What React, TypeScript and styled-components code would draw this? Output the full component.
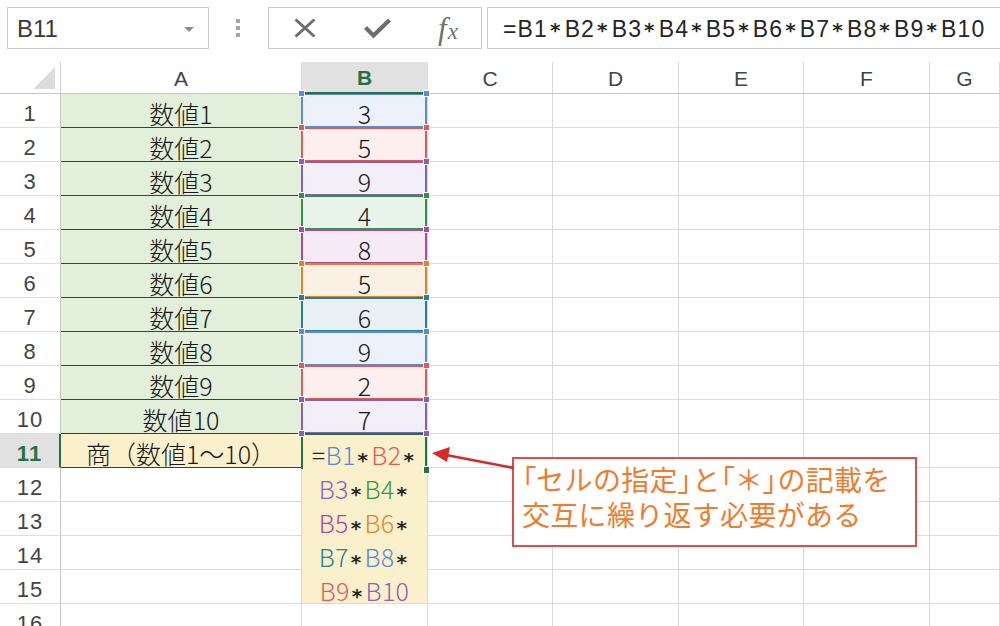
import React from "react";
import styled, { createGlobalStyle } from "styled-components";

const GlobalStyle = createGlobalStyle`
  html, body { margin: 0; padding: 0; background: #ffffff; }
  body { font-family: "Liberation Sans", "Noto Sans CJK JP", sans-serif; }
  #root { width: 1000px; height: 626px; }
`;

type RangeColor = { border: string; bg: string; text: string };

const BLUE: RangeColor = { border: "#5b8bd0", bg: "#edf1fa", text: "#5b8bd0" };
const RED: RangeColor = { border: "#e05a5a", bg: "#fcefee", text: "#e45a5a" };
const PURPLE: RangeColor = { border: "#8762b4", bg: "#f2eff8", text: "#8a62b8" };
const GREEN: RangeColor = { border: "#2f9340", bg: "#e8f3e9", text: "#2f9a40" };
const MAGENTA: RangeColor = { border: "#b4479b", bg: "#f6ebf4", text: "#b9449e" };
const ORANGE: RangeColor = { border: "#df8428", bg: "#faf0e4", text: "#e3872b" };
const TEAL: RangeColor = { border: "#2a7d9c", bg: "#e9f0f4", text: "#2a80a2" };

const VALUES: { value: number; color: RangeColor }[] = [
  { value: 3, color: BLUE },
  { value: 5, color: RED },
  { value: 9, color: PURPLE },
  { value: 4, color: GREEN },
  { value: 8, color: MAGENTA },
  { value: 5, color: ORANGE },
  { value: 6, color: TEAL },
  { value: 9, color: BLUE },
  { value: 2, color: RED },
  { value: 7, color: PURPLE },
];

const COLUMNS = ["A", "B", "C", "D", "E", "F", "G"];
const ROWS = Array.from({ length: 16 }, (_, i) => i + 1);
const GRID_LINE = "#dadada";
const EXCEL_GREEN = "#217346";
const CELL_FONT = `"Noto Sans CJK JP", "Liberation Sans", sans-serif`;

/* ---------- page ---------- */

const Page = styled.div`
  position: relative;
  width: 1000px;
  height: 626px;
  overflow: hidden;
  background: #fff;
  display: flex;
  flex-direction: column;
`;

/* ---------- toolbar ---------- */

const Toolbar = styled.div`
  flex: none;
  height: 62px;
  box-sizing: border-box;
  padding: 7px 0 0 7px;
  display: flex;
  align-items: flex-start;
`;

const NameBox = styled.div`
  width: 202px;
  height: 42px;
  box-sizing: border-box;
  border: 1px solid #c9c9c9;
  display: flex;
  align-items: center;
  justify-content: space-between;
  padding: 2px 14px 0 9px;
  font-size: 24px;
  color: #3a3a3a;
`;

const DropTriangle = styled.span`
  width: 0;
  height: 0;
  border-left: 5px solid transparent;
  border-right: 5px solid transparent;
  border-top: 5px solid #8c8c8c;
`;

const Grip = styled.div`
  width: 4px;
  margin: 12px 28px 0 27px;
  display: flex;
  flex-direction: column;
  gap: 3px;
`;

const GripDot = styled.span`
  width: 4px;
  height: 4px;
  background: #a6a6a6;
`;

const ButtonGroup = styled.div`
  width: 214px;
  height: 42px;
  box-sizing: border-box;
  border: 1px solid #c9c9c9;
  display: grid;
  grid-template-columns: 72px 72px 70px;
  align-items: center;
  justify-items: center;
`;

const IconButton = styled.span`
  display: flex;
  align-items: center;
  justify-content: center;
`;

const Fx = styled.span`
  font-family: "Liberation Serif", "DejaVu Serif", serif;
  font-style: italic;
  color: #707070;
  display: flex;
  align-items: baseline;
  margin-top: 2px;
`;

const FxF = styled.span`
  font-size: 31px;
`;

const FxX = styled.span`
  font-size: 23px;
  margin-left: 1px;
`;

const FormulaBar = styled.div`
  flex: 1;
  height: 42px;
  margin-left: 5px;
  box-sizing: border-box;
  border: 1px solid #c9c9c9;
  border-right: none;
  display: flex;
  align-items: center;
  padding: 3px 0 0 15px;
  font-size: 23px;
  color: #262626;
  white-space: nowrap;
  overflow: hidden;
  letter-spacing: 1.15px;
`;

const Star = styled.span`
  display: inline-block;
  font-family: "DejaVu Sans", sans-serif;
  font-weight: 700;
  font-size: 20px;
  line-height: 1;
  vertical-align: -0.12em;
  margin: 0 3px 0 2px;
  color: #262626;
`;

/* ---------- sheet ---------- */

const Sheet = styled.div`
  display: grid;
  grid-template-columns: 61px 241px 126px 125px 126px 125px 126px 70px;
  grid-template-rows: 32px repeat(16, 34px);
`;

const Corner = styled.div`
  box-sizing: border-box;
  border-right: 1px solid #cfcfcf;
  border-bottom: 1px solid #c6c6c6;
  display: flex;
  align-items: flex-end;
  justify-content: flex-end;
  padding: 0 5px 4px 0;
`;

const CornerTriangle = styled.span`
  width: 22px;
  height: 22px;
  background: #dcdcdc;
  clip-path: polygon(100% 0, 100% 100%, 0 100%);
`;

const ColHeader = styled.div<{ $active?: boolean }>`
  box-sizing: border-box;
  border-right: 1px solid #d9d9d9;
  border-bottom: ${(p) => (p.$active ? `2px solid ${EXCEL_GREEN}` : "1px solid #c6c6c6")};
  background: ${(p) => (p.$active ? "#e1e1e1" : "#ffffff")};
  color: ${(p) => (p.$active ? EXCEL_GREEN : "#444444")};
  font-weight: ${(p) => (p.$active ? 700 : 400)};
  font-size: 21px;
  display: flex;
  align-items: center;
  justify-content: center;
  padding-top: 2px;
  position: relative;
  z-index: ${(p) => (p.$active ? 15 : "auto")};
`;

const RowHeader = styled.div<{ $active?: boolean }>`
  box-sizing: border-box;
  border-right: ${(p) => (p.$active ? `2px solid ${EXCEL_GREEN}` : "1px solid #c6c6c6")};
  border-bottom: 1px solid #dedede;
  background: ${(p) => (p.$active ? "#e1e1e1" : "#ffffff")};
  color: ${(p) => (p.$active ? EXCEL_GREEN : "#444444")};
  font-weight: ${(p) => (p.$active ? 700 : 400)};
  font-size: 22px;
  letter-spacing: 1px;
  display: flex;
  align-items: center;
  justify-content: center;
  padding-top: 6px;
`;

const Cell = styled.div<{ $bg?: string; $dark?: boolean }>`
  position: relative;
  box-sizing: border-box;
  border-right: 1px solid ${GRID_LINE};
  border-bottom: 1px solid ${(p) => (p.$dark ? "#3d3d3d" : GRID_LINE)};
  background: ${(p) => p.$bg ?? "#ffffff"};
  display: flex;
  align-items: center;
  justify-content: center;
  padding-top: 4px;
  font-family: ${CELL_FONT};
  font-weight: 300;
  font-size: 25px;
  color: #1a1a1a;
  white-space: nowrap;
`;

const RangeFrame = styled.span<{ $color: string; $layer: number }>`
  position: absolute;
  top: -1px;
  left: -1px;
  right: 0;
  bottom: -1px;
  border: 2px solid ${(p) => p.$color};
  z-index: ${(p) => p.$layer};
  pointer-events: none;
`;

const Handle = styled.span<{ $color: string; $v: "top" | "bottom"; $h: "left" | "right" }>`
  position: absolute;
  ${(p) => p.$v}: -4px;
  ${(p) => p.$h}: ${(p) => (p.$h === "left" ? -4 : -3)}px;
  width: 5px;
  height: 5px;
  background: ${(p) => p.$color};
  border: 1px solid #ffffff;
  z-index: 30;
`;

const EditCell = styled.div`
  position: relative;
  grid-row: span 5;
  box-sizing: border-box;
  border-right: 1px solid ${GRID_LINE};
  border-bottom: 1px solid ${GRID_LINE};
  background: #fbf0cc;
  display: flex;
  flex-direction: column;
  align-items: center;
  padding-top: 3px;
  font-family: ${CELL_FONT};
  font-weight: 300;
  font-size: 25px;
  color: #262626;
  letter-spacing: 0.3px;
`;

const EditLine = styled.div`
  height: 34px;
  line-height: 34px;
  white-space: nowrap;
`;

const RefText = styled.span<{ $color: string }>`
  color: ${(p) => p.$color};
`;

const ActiveFrame = styled.span`
  position: absolute;
  top: -1px;
  left: -1px;
  right: 0;
  height: 36px;
  box-sizing: border-box;
  border: 2px solid ${EXCEL_GREEN};
  border-bottom: none;
  z-index: 20;
`;

const FillHandle = styled.span`
  position: absolute;
  top: 32px;
  right: -3px;
  width: 5px;
  height: 6px;
  background: ${EXCEL_GREEN};
  border: 1px solid #ffffff;
  z-index: 21;
`;

/* ---------- callout ---------- */

const Callout = styled.div`
  position: absolute;
  left: 512px;
  top: 457px;
  width: 405px;
  height: 90px;
  box-sizing: border-box;
  border: 2px solid #de4d4b;
  background: #ffffff;
  padding: 3px 0 0 8px;
  font-family: "Noto Sans CJK JP", sans-serif;
  font-weight: 400;
  font-size: 28px;
  line-height: 35px;
  letter-spacing: 0.3px;
  color: #ee7d31;
  white-space: nowrap;
  z-index: 40;
`;

const Bracket = styled.span`
  font-feature-settings: "palt";
`;

const Arrow = styled.svg`
  position: absolute;
  left: 426px;
  top: 440px;
  z-index: 41;
  overflow: visible;
`;

/* ---------- parts ---------- */

type Token = { text: string; color?: string };

const FORMULA_LINES: Token[][] = [
  [{ text: "=" }, { text: "B1", color: BLUE.text }, { text: "*" }, { text: "B2", color: RED.text }, { text: "*" }],
  [{ text: "B3", color: PURPLE.text }, { text: "*" }, { text: "B4", color: GREEN.text }, { text: "*" }],
  [{ text: "B5", color: MAGENTA.text }, { text: "*" }, { text: "B6", color: ORANGE.text }, { text: "*" }],
  [{ text: "B7", color: TEAL.text }, { text: "*" }, { text: "B8", color: BLUE.text }, { text: "*" }],
  [{ text: "B9", color: RED.text }, { text: "*" }, { text: "B10", color: PURPLE.text }],
];

const renderToken = (t: Token, i: number) =>
  t.text === "*" ? (
    <Star key={i}>*</Star>
  ) : t.color ? (
    <RefText key={i} $color={t.color}>
      {t.text}
    </RefText>
  ) : (
    <span key={i}>{t.text}</span>
  );

const FormulaText = ({ formula }: { formula: string }) => {
  const parts = formula.split("*");
  return (
    <>
      {parts.map((p, i) => (
        <React.Fragment key={i}>
          {p}
          {i < parts.length - 1 && <Star>*</Star>}
        </React.Fragment>
      ))}
    </>
  );
};

const Handles = ({ color }: { color: string }) => (
  <>
    <Handle $color={color} $v="top" $h="left" />
    <Handle $color={color} $v="top" $h="right" />
    <Handle $color={color} $v="bottom" $h="left" />
    <Handle $color={color} $v="bottom" $h="right" />
  </>
);

const CrossIcon = () => (
  <svg width="24" height="22" viewBox="0 0 24 22">
    <path d="M2.5 2.5 L21.5 19.5 M21.5 2.5 L2.5 19.5" stroke="#6e6e6e" strokeWidth="3" fill="none" />
  </svg>
);

const CheckIcon = () => (
  <svg width="27" height="22" viewBox="0 0 27 22">
    <path d="M1.5 10.5 L9.5 18.5 L25.5 3" stroke="#6e6e6e" strokeWidth="4.2" fill="none" strokeLinejoin="miter" />
  </svg>
);

const renderRow = (r: number) => {
  const cells: React.ReactNode[] = [];
  cells.push(
    <RowHeader key={`h${r}`} $active={r === 11}>
      {r}
    </RowHeader>
  );
  if (r <= 10) {
    cells.push(
      <Cell key={`a${r}`} $bg="#e2efda" $dark>
        数値{r}
      </Cell>
    );
    const v = VALUES[r - 1];
    cells.push(
      <Cell key={`b${r}`} $bg={v.color.bg}>
        {v.value}
        <RangeFrame $color={v.color.border} $layer={r} />
        <Handles color={v.color.border} />
      </Cell>
    );
  } else if (r === 11) {
    cells.push(
      <Cell key={`a${r}`} $bg="#fbf0cc" $dark>
        商（数値1～10）
      </Cell>
    );
    cells.push(
      <EditCell key={`b${r}`}>
        {FORMULA_LINES.map((line, i) => (
          <EditLine key={i}>{line.map(renderToken)}</EditLine>
        ))}
        <ActiveFrame />
        <FillHandle />
      </EditCell>
    );
  } else {
    cells.push(<Cell key={`a${r}`} />);
    if (r > 15) cells.push(<Cell key={`b${r}`} />);
  }
  for (let c = 2; c < COLUMNS.length; c++) {
    cells.push(<Cell key={`${COLUMNS[c]}${r}`} />);
  }
  return cells;
};

export default function App() {
  return (
    <>
      <GlobalStyle />
      <Page>
        <Toolbar>
          <NameBox>
            B11
            <DropTriangle />
          </NameBox>
          <Grip>
            <GripDot />
            <GripDot />
            <GripDot />
          </Grip>
          <ButtonGroup>
            <IconButton>
              <CrossIcon />
            </IconButton>
            <IconButton>
              <CheckIcon />
            </IconButton>
            <Fx>
              <FxF>f</FxF>
              <FxX>x</FxX>
            </Fx>
          </ButtonGroup>
          <FormulaBar>
            <FormulaText formula="=B1*B2*B3*B4*B5*B6*B7*B8*B9*B10" />
          </FormulaBar>
        </Toolbar>
        <Sheet>
          <Corner>
            <CornerTriangle />
          </Corner>
          {COLUMNS.map((c) => (
            <ColHeader key={c} $active={c === "B"}>
              {c}
            </ColHeader>
          ))}
          {ROWS.map(renderRow)}
        </Sheet>
        <Callout>
          <div>
            <Bracket>「</Bracket>セルの指定<Bracket>」</Bracket>と<Bracket>「</Bracket>＊<Bracket>」</Bracket>の記載を
          </div>
          <div>交互に繰り返す必要がある</div>
        </Callout>
        <Arrow width="90" height="40" viewBox="0 0 90 40">
          <line x1="88" y1="28" x2="20" y2="15" stroke="#d62a2a" strokeWidth="2.5" />
          <polygon points="6,13 24,7 21,22" fill="#d62a2a" />
        </Arrow>
      </Page>
    </>
  );
}
